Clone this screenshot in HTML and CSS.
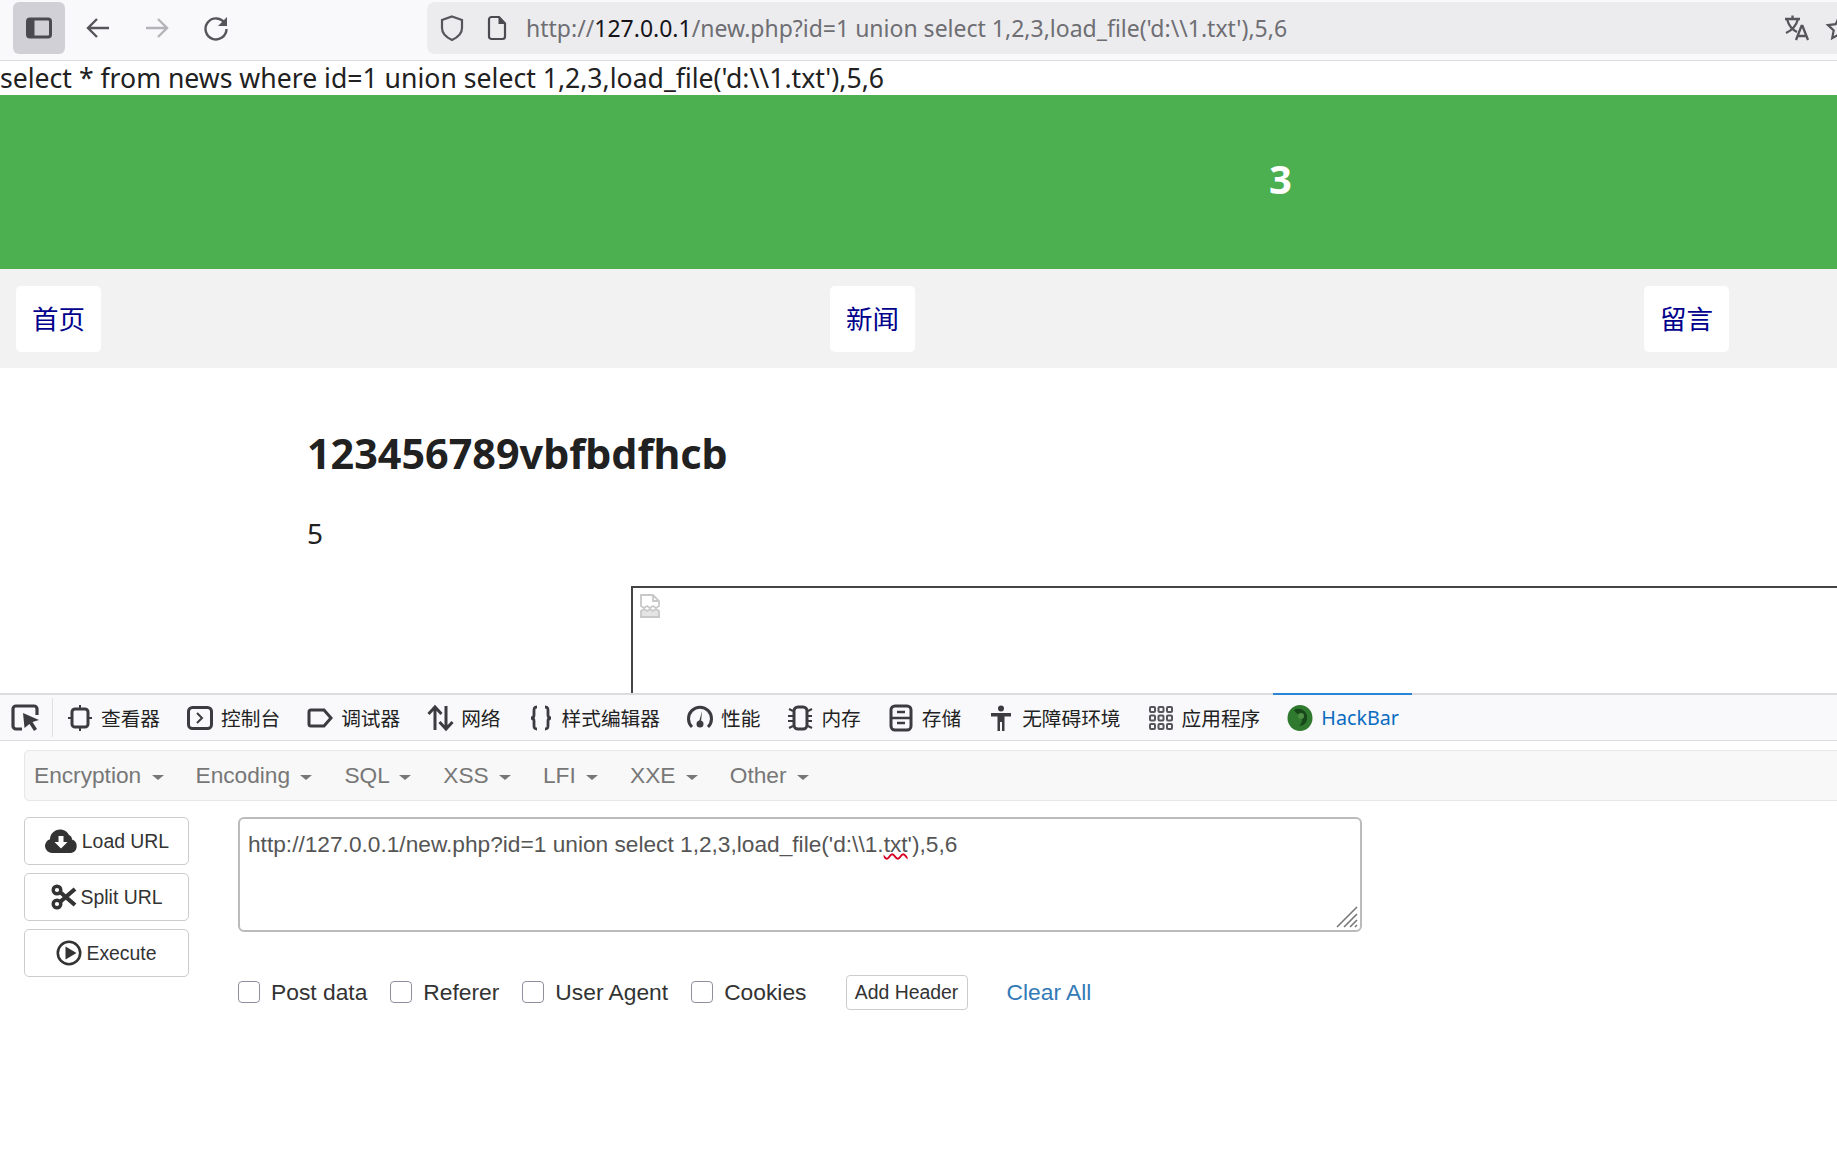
FILE: index.html
```html
<!DOCTYPE html>
<html>
	<head>
		<meta charset="UTF-8">
		<title>new.php</title>
		<link rel="stylesheet" href="styles.css">
	</head>
	<body>
		<!-- browser toolbar -->
		<div class="toolbar">
			<div class="tool_btn sidebar_btn">
				<svg width="28" height="24" viewBox="0 0 28 24"><rect x="2.5" y="3" width="23" height="18" rx="2.5" fill="none" stroke="#4a4a50" stroke-width="3"/><rect x="2.5" y="3" width="7" height="18" fill="#4a4a50"/></svg>
			</div>
			<div class="tool_btn">
				<svg width="28" height="28" viewBox="0 0 28 28"><path d="M25 14H4M13 5l-9 9 9 9" fill="none" stroke="#55555a" stroke-width="2.4"/></svg>
			</div>
			<div class="tool_btn off">
				<svg width="28" height="28" viewBox="0 0 28 28"><path d="M3 14h21M15 5l9 9-9 9" fill="none" stroke="#b4b4b8" stroke-width="2.4"/></svg>
			</div>
			<div class="tool_btn">
				<svg width="28" height="28" viewBox="0 0 28 28"><path d="M23 9.5A10.5 10.5 0 1 0 24.5 15" fill="none" stroke="#55555a" stroke-width="2.4"/><path d="M25 3v9h-9z" fill="#55555a"/></svg>
			</div>
			<div class="urlbar">
				<svg class="shield" width="26" height="28" viewBox="0 0 26 28"><path d="M13 2.5l10 3.5v8c0 6-4.500 9.500-10 12-5.500-2.500-10-6-10-12V6z" fill="none" stroke="#55555a" stroke-width="2.2"/></svg>
				<svg class="pageicon" width="22" height="26" viewBox="0 0 22 26"><path d="M3 4.500a2.500 2.500 0 0 1 2.500-2.500H13l6 6.500v13a2.500 2.500 0 0 1-2.500 2.500h-11A2.500 2.500 0 0 1 3 21.500z" fill="none" stroke="#4a4a50" stroke-width="2.2"/><path d="M12.500 2l7 7h-7z" fill="#4a4a50"/></svg>
				<div class="urltext">http://<b>127.0.0.1</b>/new.php?id=1 union select 1,2,3,load_file('d:\\1.txt'),5,6</div>
				<span class="trans">
					<svg width="28" height="28" viewBox="0 0 28 28"><path d="M2 5h15M9.500 1.500V5M4 5c1.500 6 5 10.500 10 13M15 5c-1.500 6-5.500 11-12 14M13 26l5.500-14h1l5.500 14M15 22h8" fill="none" stroke="#55555a" stroke-width="2.300"/></svg>
				</span>
				<span class="star">
					<svg width="28" height="28" viewBox="0 0 28 28"><path d="M14 3l3.300 7.200 7.700.9-5.700 5.300 1.500 7.700L14 20.300l-6.800 3.800 1.500-7.700L3 11.100l7.700-.9z" fill="none" stroke="#55555a" stroke-width="2.200"/></svg>
				</span>
			</div>
		</div>

		<!-- page in the browser -->
		<div class="page">
			<div class="sql">select * from news where id=1 union select 1,2,3,load_file('d:\\1.txt'),5,6</div>
			<div class="banner">3</div>
			<div class="nav">
				<a href="#">首页</a>
				<a href="#">新闻</a>
				<a href="#">留言</a>
			</div>
			<div class="article">
				<h1>123456789vbfbdfhcb</h1>
				<p>5</p>
				<div class="imgbox">
					<svg width="20" height="24" viewBox="0 0 20 24"><path d="M1 12V1h12l6 6v5l-3 2-3-2-3 2-3-2-3 2zM13 1v6h6" fill="none" stroke="#c8c8c8" stroke-width="1.800"/><path d="M1 17l3-2 3 2 3-2 3 2 3-2 3 2v6H1z" fill="#e4e4e4" stroke="#c8c8c8" stroke-width="1.800"/></svg>
				</div>
			</div>
		</div>

		<!-- devtools -->
		<div class="devtools">
			<div class="tabs">
				<div class="picker">
					<svg width="30" height="28" viewBox="0 0 30 28"><path d="M11 25H5a3 3 0 0 1-3-3V5a3 3 0 0 1 3-3h18a3 3 0 0 1 3 3v6" fill="none" stroke="#3c3c40" stroke-width="3.200"/><path d="M12 9l16 7-6.500 2 4.500 7-3 2-4.500-7-5 4z" fill="#3c3c40"/></svg>
				</div>
				<div class="tab">
					<svg width="28" height="28" viewBox="0 0 28 28"><rect x="6" y="5" width="16" height="18" rx="3" fill="none" stroke="#3c3c40" stroke-width="3"/><path d="M14 1v4M14 23v4M2 14h4M22 14h4" stroke="#3c3c40" stroke-width="2"/></svg>
					<span>查看器</span>
				</div>
				<div class="tab">
					<svg width="28" height="28" viewBox="0 0 28 28"><rect x="2.500" y="3.500" width="23" height="21" rx="4" fill="none" stroke="#3c3c40" stroke-width="3"/><path d="M11 9l5 5-5 5" fill="none" stroke="#3c3c40" stroke-width="2"/></svg>
					<span>控制台</span>
				</div>
				<div class="tab">
					<svg width="28" height="28" viewBox="0 0 28 28"><path d="M5 6h13l7 8-7 8H5a2 2 0 0 1-2-2V8a2 2 0 0 1 2-2z" fill="none" stroke="#3c3c40" stroke-width="3"/></svg>
					<span>调试器</span>
				</div>
				<div class="tab">
					<svg width="28" height="28" viewBox="0 0 28 28"><path d="M9 26V4M2.500 10L9 3l6.500 7M20 2v22M13.500 18l6.500 7 6.500-7" fill="none" stroke="#3c3c40" stroke-width="3"/></svg>
					<span>网络</span>
				</div>
				<div class="tab">
					<svg width="28" height="28" viewBox="0 0 28 28"><path d="M10 3c-3 0-3 1.500-3 4v4c0 2-1 3-3 3 2 0 3 1 3 3v4c0 2.500 0 4 3 4M18 3c3 0 3 1.500 3 4v4c0 2 1 3 3 3-2 0-3 1-3 3v4c0 2.500 0 4-3 4" fill="none" stroke="#3c3c40" stroke-width="2.800"/></svg>
					<span>样式编辑器</span>
				</div>
				<div class="tab">
					<svg width="28" height="28" viewBox="0 0 28 28"><path d="M6 23A11.500 11.500 0 1 1 22 23" fill="none" stroke="#3c3c40" stroke-width="3"/><path d="M16 7l-1 11h-2z" fill="#3c3c40"/><circle cx="14" cy="20" r="3.500" fill="#3c3c40"/></svg>
					<span>性能</span>
				</div>
				<div class="tab">
					<svg width="28" height="28" viewBox="0 0 28 28"><rect x="8" y="3" width="13" height="22" rx="4" fill="none" stroke="#3c3c40" stroke-width="3"/><path d="M7 7L3 5M7 12H2M7 17H2M7 22l-4 2M22 7l4-2M22 12h4M22 17h4M22 22l4 2" stroke="#3c3c40" stroke-width="2"/></svg>
					<span>内存</span>
				</div>
				<div class="tab">
					<svg width="28" height="28" viewBox="0 0 28 28"><rect x="4" y="2" width="20" height="24" rx="4" fill="none" stroke="#3c3c40" stroke-width="3"/><path d="M4 14h20M10 8h8M10 19h8" stroke="#3c3c40" stroke-width="2.500"/></svg>
					<span>存储</span>
				</div>
				<div class="tab">
					<svg width="28" height="28" viewBox="0 0 28 28"><circle cx="14" cy="4.500" r="3" fill="#3c3c40"/><path d="M4 9h20v3.500h-6.500V27h-2.500v-9h-2v9h-2.500V12.500H4z" fill="#3c3c40"/></svg>
					<span>无障碍环境</span>
				</div>
				<div class="tab">
					<svg width="28" height="28" viewBox="0 0 28 28"><g fill="none" stroke="#55555a" stroke-width="2"><rect x="3" y="3" width="5" height="5" rx="1"/><rect x="11.500" y="3" width="5" height="5" rx="1"/><rect x="20" y="3" width="5" height="5" rx="1"/><rect x="3" y="11.500" width="5" height="5" rx="1"/><rect x="11.500" y="11.500" width="5" height="5" rx="1"/><rect x="20" y="11.500" width="5" height="5" rx="1"/><rect x="3" y="20" width="5" height="5" rx="1"/><rect x="11.500" y="20" width="5" height="5" rx="1"/><rect x="20" y="20" width="5" height="5" rx="1"/></g></svg>
					<span>应用程序</span>
				</div>
				<div class="tab active">
					<svg width="28" height="28" viewBox="0 0 28 28"><ellipse cx="14" cy="14" rx="12.500" ry="13" fill="#2f7a2f"/><path d="M8 6c5-3 12 0 13 6s-3 10-8 10c3-3 4-6 2-9s-5-3-7-7z" fill="#16481a"/><circle cx="15" cy="12" r="3" fill="#4f8f45"/></svg>
					<span>HackBar</span>
				</div>
			</div>

			<div class="hackbar">
				<div class="menu">
					<span class="item">Encryption <i class="caret"></i></span>
					<span class="item">Encoding <i class="caret"></i></span>
					<span class="item">SQL <i class="caret"></i></span>
					<span class="item">XSS <i class="caret"></i></span>
					<span class="item">LFI <i class="caret"></i></span>
					<span class="item">XXE <i class="caret"></i></span>
					<span class="item">Other <i class="caret"></i></span>
				</div>
				<div class="work">
					<div class="actions">
						<button>
							<svg width="34" height="26" viewBox="0 0 34 26"><path d="M8 25a7 7 0 0 1-2-13.700C6 6 10.500 1.500 16 1.500c4 0 7.300 2.200 9 5.500a5 5 0 0 1 3 4.500A7 7 0 0 1 27 25z" fill="#333"/><path d="M14.500 8h5v6h4L17 20.500 10.500 14h4z" fill="#fff"/></svg>
							Load URL
						</button>
						<button>
							<svg width="26" height="26" viewBox="0 0 26 26"><circle cx="6" cy="6" r="3.800" fill="none" stroke="#333" stroke-width="3.400"/><circle cx="6" cy="20" r="3.800" fill="none" stroke="#333" stroke-width="3.400"/><path d="M9 8l15 13M9 18L24 5" stroke="#333" stroke-width="4.200"/></svg>
							Split URL
						</button>
						<button>
							<svg width="26" height="26" viewBox="0 0 26 26"><circle cx="13" cy="13" r="11.200" fill="none" stroke="#333" stroke-width="2.600"/><path d="M9.500 6.500l11 6.500-11 6.500z" fill="#333"/></svg>
							Execute
						</button>
					</div>
					<div class="right">
						<div class="urlbox">
							http://127.0.0.1/new.php?id=1 union select 1,2,3,load_file('d:\\1.<span class="spell">txt</span>'),5,6
							<svg class="grip" width="24" height="24" viewBox="0 0 24 24"><path d="M2 22L22 2M9 22L22 9M15 22l7-7M20 22l2-2" stroke="#777" stroke-width="1.600"/></svg>
						</div>
						<div class="options">
							<label><input type="checkbox"> Post data</label>
							<label><input type="checkbox"> Referer</label>
							<label><input type="checkbox"> User Agent</label>
							<label><input type="checkbox"> Cookies</label>
							<button class="addheader">Add Header</button>
							<a class="clear" href="#">Clear All</a>
						</div>
					</div>
				</div>
			</div>
		</div>
	</body>
</html>
```

FILE: styles.css
```css
html,body{
	margin: 0;
	height: 1163px;
	overflow: hidden;
	background: #fff;
}
body{
	display: flex;
	flex-direction: column;
	font-family: "Noto Sans", "Noto Sans CJK SC", sans-serif;
	color: #212121;
}
svg{
	display: block;
	flex: none;
}

/* browser toolbar */
.toolbar{
	height: 58px;
	padding: 2px 0 0 13px;
	flex: none;
	display: flex;
	align-items: flex-start;
	background: #f9f9fb;
	border-bottom: 1px solid #dcdcde;
}
.tool_btn{
	width: 52px;
	height: 52px;
	margin-right: 7px;
	border-radius: 6px;
	display: flex;
	align-items: center;
	justify-content: center;
}
.sidebar_btn{
	background: #d0d0d6;
}
.urlbar{
	flex: 1;
	height: 52px;
	margin-left: 178px;
	margin-right: -60px;
	background: #ececef;
	border-radius: 8px 0 0 8px;
	display: flex;
	align-items: center;
	padding-left: 12px;
}
.shield{
	margin-right: 21px;
}
.urltext{
	margin-left: 18px;
	font-size: 23px;
	color: #6e6e73;
	white-space: nowrap;
	flex: 1;
}
.urltext b{
	font-weight: normal;
	color: #15141a;
}
.trans{
	margin-right: 14px;
}
.star{
	margin-right: 44px;
}

/* page */
.page{
	height: 632px;
	flex: none;
	overflow: hidden;
}
.sql{
	height: 34px;
	line-height: 34px;
	font-size: 26.6px;
	white-space: nowrap;
}
.banner{
	height: 166px;
	padding: 0 0 8px 1269px;
	background: #4caf50;
	color: #fff;
	font-size: 40px;
	font-weight: bold;
	display: flex;
	align-items: center;
}
.nav{
	height: 99px;
	background: #f2f2f2;
	display: flex;
	align-items: center;
	justify-content: space-between;
	padding: 0 108px 0 16px;
}
.nav a{
	width: 85px;
	height: 66px;
	line-height: 66px;
	background: #fff;
	border-radius: 5px;
	text-align: center;
	font-size: 26.5px;
	color: #00008b;
	text-decoration: none;
}
.article{
	padding-left: 307px;
}
.article h1{
	margin: 60px 0 0;
	height: 50px;
	line-height: 50px;
	font-size: 41.3px;
}
.article p{
	margin: 36px 0 0;
	height: 38px;
	line-height: 38px;
	font-size: 28px;
}
.imgbox{
	margin: 34px 0 0 324px;
	width: 1400px;
	height: 300px;
	border: 2px solid #444;
	padding: 6px 7px;
}

/* devtools */
.devtools{
	flex: 1;
	border-top: 2px solid #dcdcde;
	font-size: 19.7px;
}
.tabs{
	height: 45px;
	display: flex;
	background: #f9f9fb;
	border-bottom: 1px solid #dcdcde;
}
.picker{
	width: 53px;
	border-right: 1px solid #e0e0e2;
	margin: 3px 0;
	display: flex;
	align-items: center;
	padding-left: 11px;
	box-sizing: border-box;
}
.tab{
	display: flex;
	align-items: center;
	gap: 7px;
	padding: 0 13px;
	color: #222;
}
.tab.active{
	color: #0a6cc0;
	margin-top: -2px;
	border-top: 2px solid #2a86d5;
}

/* hackbar */
.hackbar{
	padding: 9px 0 0 24px;
	font-family: "Liberation Sans", Arial, sans-serif;
	color: #333;
}
.menu{
	height: 49px;
	display: flex;
	align-items: center;
	gap: 32px;
	margin-right: -10px;
	padding-left: 9px;
	background: #f8f8f8;
	border: 1px solid #e7e7e7;
	border-radius: 5px;
	font-size: 22.7px;
	color: #777;
}
.caret{
	display: inline-block;
	margin-left: 4px;
	vertical-align: middle;
	border-top: 5px solid #777;
	border-left: 6px solid transparent;
	border-right: 6px solid transparent;
}
.work{
	display: flex;
	margin-top: 16px;
	gap: 49px;
}
.actions{
	display: flex;
	flex-direction: column;
	gap: 8px;
}
.actions button{
	width: 165px;
	height: 48px;
	display: flex;
	align-items: center;
	justify-content: center;
	gap: 4px;
	padding: 0;
	background: #fff;
	border: 1px solid #ccc;
	border-radius: 5px;
	font: 19.4px "Liberation Sans", Arial, sans-serif;
	color: #333;
}
.urlbox{
	position: relative;
	width: 1124px;
	height: 115px;
	box-sizing: border-box;
	padding: 11px 8px;
	border: 2px solid #bbb;
	border-radius: 6px;
	font-size: 22.7px;
	line-height: 28px;
	color: #555;
	white-space: nowrap;
}
.spell{
	text-decoration: underline wavy #d70022;
	text-decoration-thickness: 1.5px;
}
.grip{
	position: absolute;
	right: 1px;
	bottom: 1px;
}
.options{
	display: flex;
	align-items: center;
	height: 36px;
	margin-top: 42px;
	font-size: 22.8px;
}
.options label{
	display: flex;
	align-items: center;
	gap: 10px;
	margin-right: 23px;
}
.options input{
	appearance: none;
	width: 22px;
	height: 22px;
	margin: 0 1px 0 0;
	background: #fff;
	border: 1px solid #8f8f9d;
	border-radius: 4px;
}
.addheader{
	height: 35px;
	width: 122px;
	margin-left: 16px;
	padding: 0;
	background: #fff;
	border: 1px solid #ccc;
	border-radius: 4px;
	font: 19.4px "Liberation Sans", Arial, sans-serif;
	color: #333;
}
.clear{
	margin-left: 39px;
	color: #337ab7;
	text-decoration: none;
}
```
